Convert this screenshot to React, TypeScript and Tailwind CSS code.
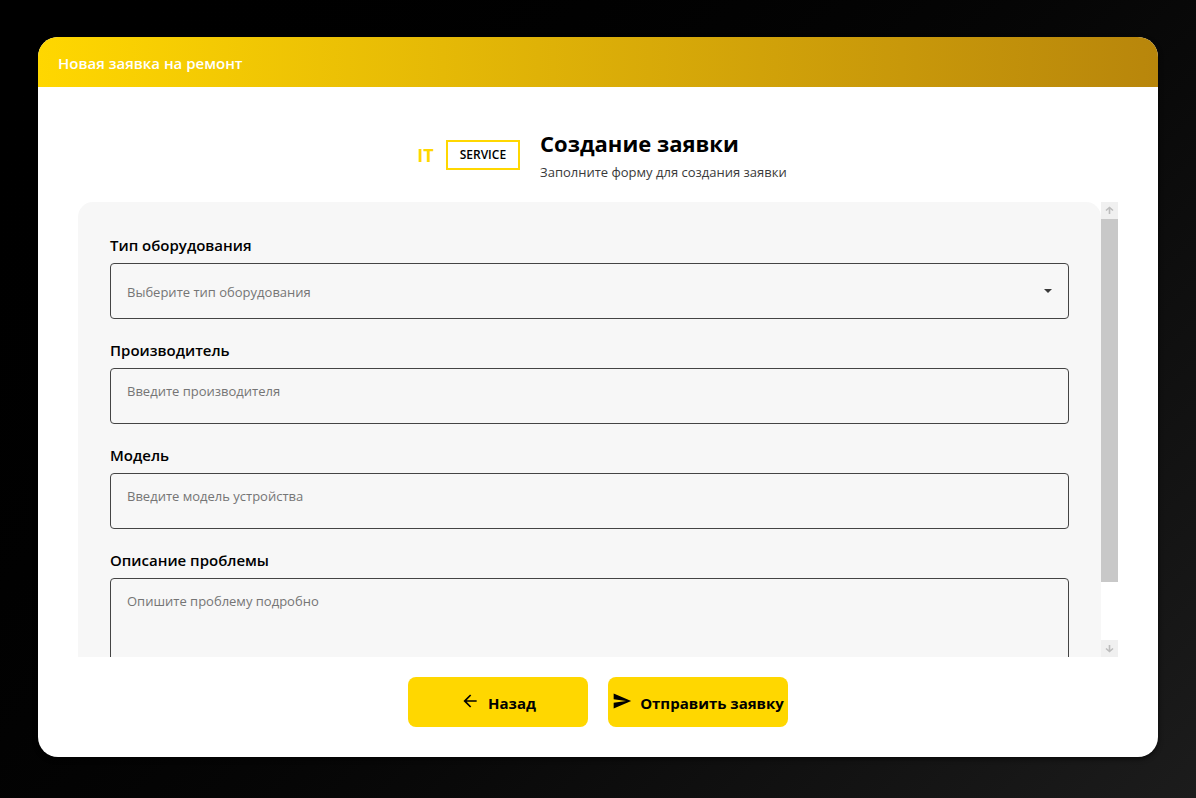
import { useCallback, useEffect, useRef, useState } from "react";
import type { ReactNode } from "react";

const fieldBase =
  "block w-full rounded border border-[#444444] bg-transparent px-4 text-[13px] leading-5 text-black outline-none placeholder:text-[#757575] focus:border-black";

function Field({ id, label, children }: { id: string; label: string; children: ReactNode }) {
  return (
    <div className="flex flex-col gap-1.5">
      <label htmlFor={id} className="text-[15px] font-semibold leading-[23px] text-black">
        {label}
      </label>
      {children}
    </div>
  );
}

function ScrollArrow({ down, onClick }: { down?: boolean; onClick: () => void }) {
  return (
    <button
      type="button"
      aria-label={down ? "Прокрутить вниз" : "Прокрутить вверх"}
      onClick={onClick}
      className="flex h-[17px] w-[17px] shrink-0 items-center justify-center bg-[#f0f0f0] text-[#bcbcbc]"
    >
      <svg width="9" height="9" viewBox="0 0 9 9" fill="none" stroke="currentColor" strokeWidth="1.6">
        {down ? <path d="M4.5 1V8M1 4.5L4.5 7.5L8 4.5" /> : <path d="M4.5 8V1M1 4.5L4.5 1.5L8 4.5" />}
      </svg>
    </button>
  );
}

function ScrollPane({ children }: { children: ReactNode }) {
  const pane = useRef<HTMLDivElement>(null);
  const [thumb, setThumb] = useState({ size: 86, offset: 0 });

  const measure = useCallback(() => {
    const el = pane.current;
    if (!el || !el.scrollHeight) return;
    setThumb({
      size: (el.clientHeight / el.scrollHeight) * 100,
      offset: (el.scrollTop / el.scrollHeight) * 100,
    });
  }, []);

  useEffect(() => {
    measure();
    window.addEventListener("resize", measure);
    return () => window.removeEventListener("resize", measure);
  }, [measure]);

  const scroll = (dy: number) => pane.current?.scrollBy({ top: dy });

  return (
    <div className="flex min-h-0 flex-1">
      <div
        ref={pane}
        onScroll={measure}
        className="min-w-0 flex-1 overflow-y-auto [scrollbar-width:none]"
      >
        {children}
      </div>
      <div className="flex flex-col">
        <ScrollArrow onClick={() => scroll(-40)} />
        <div className="min-h-0 w-[17px] flex-1">
          <div style={{ height: `${thumb.offset}%` }} />
          <div className="bg-[#c8c8c8]" style={{ height: `${thumb.size}%` }} />
        </div>
        <ScrollArrow down onClick={() => scroll(40)} />
      </div>
    </div>
  );
}

const actionButton =
  "flex h-[50px] w-[180px] items-center justify-center gap-2 whitespace-nowrap rounded-lg bg-[#ffd700] pt-0.5 text-[15px] font-bold leading-5 text-black";

export default function App() {
  return (
    <div className="flex h-screen min-h-[600px] flex-col bg-linear-135 from-black to-[#1c1c1c] px-[38px] pt-[37px] pb-[41px] font-['Open_Sans','Noto_Sans',sans-serif]">
      <main className="flex min-h-0 flex-1 flex-col overflow-hidden rounded-[20px] bg-white shadow-[0_2px_5px_rgba(0,0,0,0.6)]">
        <header className="flex h-[50px] shrink-0 items-center bg-linear-to-r from-[#ffd700] to-[#b8860b] px-5">
          <h1 className="pt-0.5 text-[15px] font-semibold leading-5 text-white">Новая заявка на ремонт</h1>
        </header>

        <form
          className="flex min-h-0 flex-1 flex-col px-10 pt-10 pb-[30px]"
          onSubmit={(event) => event.preventDefault()}
        >
          <div className="flex shrink-0 items-center justify-center gap-5 pb-5">
            <div className="flex items-center gap-3 pl-2">
              <span className="text-lg font-bold leading-6 text-[#ffd700]">IT</span>
              <span className="flex h-[30px] items-center border-2 border-[#ffd700] px-3 text-xs font-semibold text-black">
                SERVICE
              </span>
            </div>
            <div className="flex flex-col gap-0.5">
              <h2 className="text-[22px] font-bold leading-[33px] text-black">Создание заявки</h2>
              <p className="text-[13px] leading-5 text-[#3a3a3a]">Заполните форму для создания заявки</p>
            </div>
          </div>

          <ScrollPane>
            <div className="flex flex-col gap-5 rounded-[15px] bg-[#f7f7f7] p-8">
              <Field id="equipment" label="Тип оборудования">
                <div className="relative">
                  <select
                    id="equipment"
                    defaultValue=""
                    className="block h-14 w-full appearance-none rounded border border-[#444444] bg-transparent px-4 pt-0.5 text-[13px] leading-5 text-[#757575] outline-none"
                  >
                    <option value="">Выберите тип оборудования</option>
                  </select>
                  <svg
                    className="pointer-events-none absolute top-1/2 right-4 -translate-y-1/2"
                    width="10"
                    height="5"
                    viewBox="0 0 10 5"
                    fill="#3a3a3a"
                  >
                    <path d="M1 0.5H9L5 4.5Z" />
                  </svg>
                </div>
              </Field>
              <Field id="maker" label="Производитель">
                <input id="maker" type="text" placeholder="Введите производителя" className={`${fieldBase} h-14 pb-2.5`} />
              </Field>
              <Field id="model" label="Модель">
                <input id="model" type="text" placeholder="Введите модель устройства" className={`${fieldBase} h-14 pb-2.5`} />
              </Field>
              <Field id="problem" label="Описание проблемы">
                <textarea
                  id="problem"
                  placeholder="Опишите проблему подробно"
                  className={`${fieldBase} h-[120px] resize-none py-3`}
                />
              </Field>
            </div>
          </ScrollPane>

          <div className="flex shrink-0 justify-center gap-5 pt-5">
            <button type="button" className={actionButton}>
              <svg className="mb-1" width="20" height="20" viewBox="0 0 24 24" fill="currentColor">
                <path d="M20 11v2H8l5.5 5.5-1.42 1.42L4.16 12l7.92-7.92L13.5 5.5 8 11h12z" />
              </svg>
              Назад
            </button>
            <button type="submit" className={actionButton}>
              <svg className="mb-1" width="20" height="20" viewBox="0 0 24 24" fill="currentColor">
                <path d="M2 21l21-9L2 3v7l15 2-15 2v7z" />
              </svg>
              Отправить заявку
            </button>
          </div>
        </form>
      </main>
    </div>
  );
}
